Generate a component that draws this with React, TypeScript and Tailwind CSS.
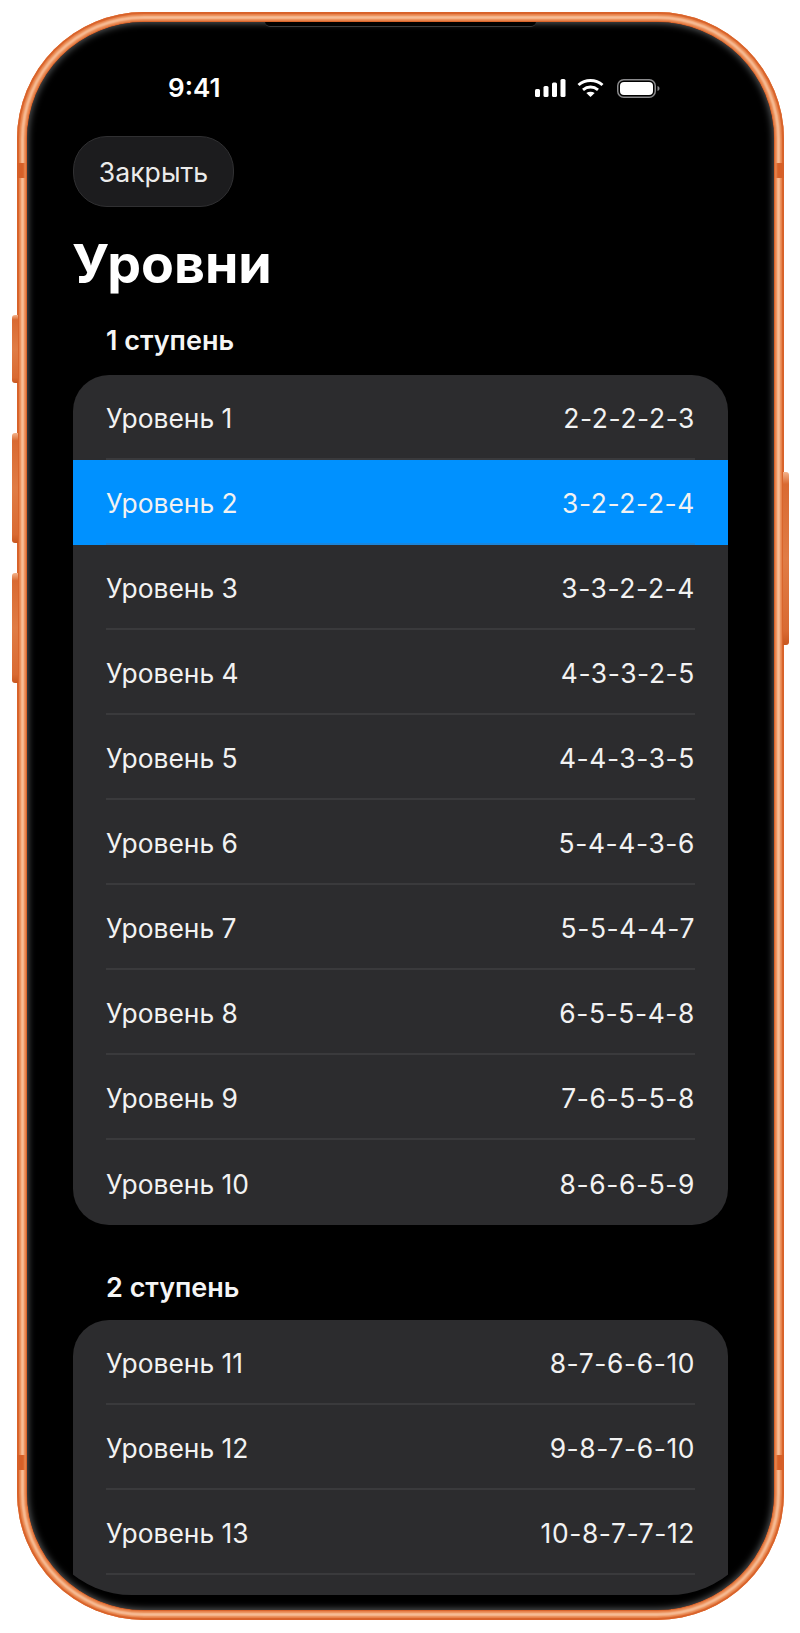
const rows1: [string, string][] = [
  ["Уровень 1", "2-2-2-2-3"],
  ["Уровень 2", "3-2-2-2-4"],
  ["Уровень 3", "3-3-2-2-4"],
  ["Уровень 4", "4-3-3-2-5"],
  ["Уровень 5", "4-4-3-3-5"],
  ["Уровень 6", "5-4-4-3-6"],
  ["Уровень 7", "5-5-4-4-7"],
  ["Уровень 8", "6-5-5-4-8"],
  ["Уровень 9", "7-6-5-5-8"],
  ["Уровень 10", "8-6-6-5-9"],
];
const rows2: [string, string][] = [
  ["Уровень 11", "8-7-6-6-10"],
  ["Уровень 12", "9-8-7-6-10"],
  ["Уровень 13", "10-8-7-7-12"],
];

function Row({ label, value, active, last }: { label: string; value: string; active?: boolean; last?: boolean }) {
  return (
    <div className={`h-[85px] shrink-0 px-[33px] ${active ? "bg-[#0091ff]" : ""}`}>
      <div className={`h-full pt-[4px] flex items-center justify-between text-[26.4px] text-[#f2f2f2] ${last ? "" : active ? "border-b-2 border-[#1a86dc]" : "border-b-2 border-[#3a3a3c]"}`}>
        <span>{label}</span>
        <span className="tracking-[0.6px]">{value}</span>
      </div>
    </div>
  );
}

function Card({ rows, activeIndex, fill }: { rows: [string, string][]; activeIndex?: number; fill?: boolean }) {
  return (
    <div className="rounded-[36px] bg-[#2c2c2e] overflow-hidden">
      {rows.map(([l, v], i) => (
        <Row key={l} label={l} value={v} active={i === activeIndex} last={!fill && i === rows.length - 1} />
      ))}
      {fill ? <div className="h-[85px]" /> : null}
    </div>
  );
}

function Rail({ className }: { className: string }) {
  return <div className={`absolute w-[6px] bg-[linear-gradient(to_bottom,#f4b48c_0,#d96a32_7%,#e07c45_50%,#d96a32_92%,#c9571f_100%)] ${className}`} />;
}

function Band({ className }: { className: string }) {
  return <div className={`absolute w-[10px] h-[15px] bg-[#d65f27] ${className}`} />;
}

export default function App() {
  return (
    <div className="w-[800px] h-[1633px] bg-white pt-[12px] pl-[17px] font-['Inter','Liberation_Sans',sans-serif]">
      <div className="relative w-[767px] h-[1608px] rounded-[127px] bg-[#f8c29d] p-[10px] shadow-[inset_0_0_1px_2px_#d8622a,inset_0_0_2px_4px_#e8854d]">
        <Rail className="left-[-5px] top-[303px] h-[68px] rounded-l-[3px]" />
        <Rail className="left-[-5px] top-[421px] h-[110px] rounded-l-[3px]" />
        <Rail className="left-[-5px] top-[561px] h-[110px] rounded-l-[3px]" />
        <Rail className="right-[-5px] top-[460px] h-[173px] rounded-r-[3px]" />
        <Band className="left-0 top-[151px]" />
        <Band className="right-0 top-[151px]" />
        <Band className="left-0 top-[1443px]" />
        <Band className="right-0 top-[1443px]" />
        <div className="relative w-full h-full rounded-[117px] bg-black px-[9px] pb-[15px] shadow-[0_0_1px_1px_#d8622a,0_0_2px_2.5px_#e8854d,inset_0_0_7px_1px_#5c5f61]">
          <div className="absolute left-[238px] right-[238px] top-0 h-[5px] bg-black border-b border-[#3a3a3c] rounded-b-[6px]" />
          <div className="relative h-full rounded-[96px] overflow-hidden flex flex-col">
            <div className="h-[110px] shrink-0 flex justify-between pl-[132px] pr-[105px]">
              <div className="pt-[50px] text-[26px] font-semibold leading-[32px] text-white">9:41</div>
              <div className="pt-[57px] flex gap-[11px] items-start">
                <svg width="31" height="18" viewBox="0 0 31 18" fill="white">
                  <rect x="0" y="10" width="5" height="8" rx="1.500" />
                  <rect x="8.500" y="7" width="5" height="11" rx="1.500" />
                  <rect x="17" y="3.500" width="5" height="14.500" rx="1.500" />
                  <rect x="25.500" y="0" width="5" height="18" rx="1.500" />
                </svg>
                <svg width="27" height="18" viewBox="0 0 27 18" fill="none" stroke="white" strokeWidth="3">
                  <path d="M1.500 6C8.300 0 18.700 0 25.500 6" />
                  <path d="M6 10.800C10.500 7.200 16.500 7.200 21 10.800" />
                  <path d="M13.500 18L9.300 13.900C11.800 12.200 15.200 12.200 17.700 13.900Z" fill="white" stroke="none" />
                </svg>
                <svg width="43" height="19" viewBox="0 0 43 19" fill="none" className="ml-[2px]">
                  <rect x="0.750" y="0.750" width="37.500" height="17.500" rx="6" stroke="#8a8a8c" strokeWidth="1.500" />
                  <rect x="3" y="3" width="33" height="13" rx="4" fill="white" />
                  <path d="M40.500 7C42 7.500 42.500 8.200 42.500 9.500C42.500 10.800 42 11.500 40.500 12Z" fill="#8a8a8c" />
                </svg>
              </div>
            </div>
            <div className="px-[37px] flex-1 min-h-0">
              <div className="w-[161px] h-[71px] mt-[4px] pt-[2px] rounded-[34px] bg-[#1c1c1e] border border-[#303032] flex items-center justify-center text-[26.6px] text-[#ebebeb]">Закрыть</div>
              <h1 className="mt-[23px] h-[68px] text-[53.7px] font-bold leading-[68px] text-white -ml-[1px]">Уровни</h1>
              <div className="mt-[25px] h-[36px] pl-[33px] text-[27px] font-semibold leading-[36px] text-[#f5f5f5]">1 ступень</div>
              <div className="mt-[16px]"><Card rows={rows1} activeIndex={1} /></div>
              <div className="mt-[45px] h-[36px] pl-[33px] text-[27px] font-semibold leading-[36px] text-[#f5f5f5]">2 ступень</div>
              <div className="mt-[14px]"><Card rows={rows2} fill /></div>
            </div>
          </div>
        </div>
      </div>
    </div>
  );
}
